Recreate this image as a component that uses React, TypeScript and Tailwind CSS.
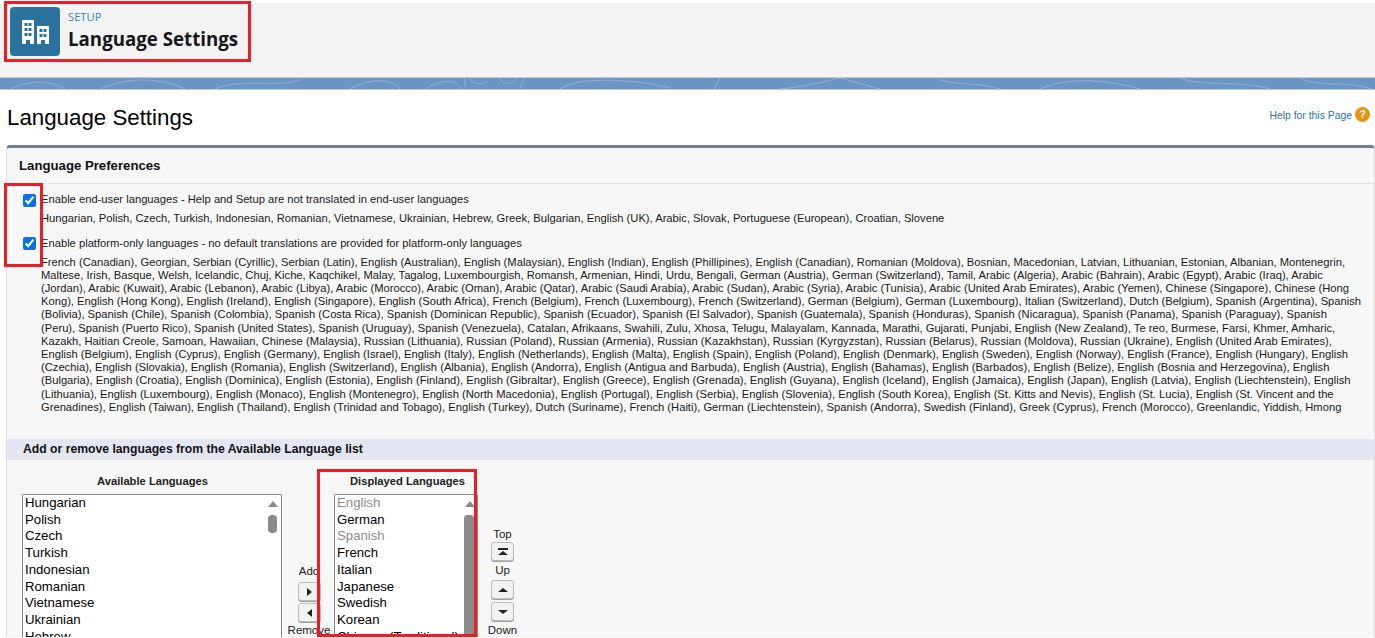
import React from "react";

const platformLines = [
  "French (Canadian), Georgian, Serbian (Cyrillic), Serbian (Latin), English (Australian), English (Malaysian), English (Indian), English (Phillipines), English (Canadian), Romanian (Moldova), Bosnian, Macedonian, Latvian, Lithuanian, Estonian, Albanian, Montenegrin,",
  "Maltese, Irish, Basque, Welsh, Icelandic, Chuj, Kiche, Kaqchikel, Malay, Tagalog, Luxembourgish, Romansh, Armenian, Hindi, Urdu, Bengali, German (Austria), German (Switzerland), Tamil, Arabic (Algeria), Arabic (Bahrain), Arabic (Egypt), Arabic (Iraq), Arabic",
  "(Jordan), Arabic (Kuwait), Arabic (Lebanon), Arabic (Libya), Arabic (Morocco), Arabic (Oman), Arabic (Qatar), Arabic (Saudi Arabia), Arabic (Sudan), Arabic (Syria), Arabic (Tunisia), Arabic (United Arab Emirates), Arabic (Yemen), Chinese (Singapore), Chinese (Hong",
  "Kong), English (Hong Kong), English (Ireland), English (Singapore), English (South Africa), French (Belgium), French (Luxembourg), French (Switzerland), German (Belgium), German (Luxembourg), Italian (Switzerland), Dutch (Belgium), Spanish (Argentina), Spanish",
  "(Bolivia), Spanish (Chile), Spanish (Colombia), Spanish (Costa Rica), Spanish (Dominican Republic), Spanish (Ecuador), Spanish (El Salvador), Spanish (Guatemala), Spanish (Honduras), Spanish (Nicaragua), Spanish (Panama), Spanish (Paraguay), Spanish",
  "(Peru), Spanish (Puerto Rico), Spanish (United States), Spanish (Uruguay), Spanish (Venezuela), Catalan, Afrikaans, Swahili, Zulu, Xhosa, Telugu, Malayalam, Kannada, Marathi, Gujarati, Punjabi, English (New Zealand), Te reo, Burmese, Farsi, Khmer, Amharic,",
  "Kazakh, Haitian Creole, Samoan, Hawaiian, Chinese (Malaysia), Russian (Lithuania), Russian (Poland), Russian (Armenia), Russian (Kazakhstan), Russian (Kyrgyzstan), Russian (Belarus), Russian (Moldova), Russian (Ukraine), English (United Arab Emirates),",
  "English (Belgium), English (Cyprus), English (Germany), English (Israel), English (Italy), English (Netherlands), English (Malta), English (Spain), English (Poland), English (Denmark), English (Sweden), English (Norway), English (France), English (Hungary), English",
  "(Czechia), English (Slovakia), English (Romania), English (Switzerland), English (Albania), English (Andorra), English (Antigua and Barbuda), English (Austria), English (Bahamas), English (Barbados), English (Belize), English (Bosnia and Herzegovina), English",
  "(Bulgaria), English (Croatia), English (Dominica), English (Estonia), English (Finland), English (Gibraltar), English (Greece), English (Grenada), English (Guyana), English (Iceland), English (Jamaica), English (Japan), English (Latvia), English (Liechtenstein), English",
  "(Lithuania), English (Luxembourg), English (Monaco), English (Montenegro), English (North Macedonia), English (Portugal), English (Serbia), English (Slovenia), English (South Korea), English (St. Kitts and Nevis), English (St. Lucia), English (St. Vincent and the",
  "Grenadines), English (Taiwan), English (Thailand), English (Trinidad and Tobago), English (Turkey), Dutch (Suriname), French (Haiti), German (Liechtenstein), Spanish (Andorra), Swedish (Finland), Greek (Cyprus), French (Morocco), Greenlandic, Yiddish, Hmong",
];

const available = ["Hungarian", "Polish", "Czech", "Turkish", "Indonesian", "Romanian", "Vietnamese", "Ukrainian", "Hebrew"];
const displayed: [string, boolean][] = [
  ["English", true], ["German", false], ["Spanish", true], ["French", false], ["Italian", false],
  ["Japanese", false], ["Swedish", false], ["Korean", false], ["Chinese (Traditional)", false],
];

function ListBox({ items, thumb, arrow, w }: { items: [string, boolean][]; thumb: string; arrow: string; w: string }) {
  return (
    <div className={`relative h-[160px] overflow-hidden rounded-t-[2px] border border-b-0 border-[#8a8a8a] bg-white pl-[2px] text-[13.2px] leading-[16.7px] text-black ${w}`}>
      {items.map(([t, dim]) => (
        <div key={t} className={dim ? "text-[#8c8c8c]" : ""}>{t}</div>
      ))}
      <div className={`absolute top-[6px] h-0 w-0 border-x-[5px] border-b-[6px] border-x-transparent border-b-[#8a8a8a] ${arrow}`} />
      <div className={`absolute top-[20px] rounded-[4px] bg-[#8a8a8a] ${thumb}`} />
    </div>
  );
}

function SmallButton({ children }: { children: React.ReactNode }) {
  return (
    <div className="flex h-[19px] w-[23px] items-center justify-center rounded-[3px] border border-[#bcbcbc] bg-[#f2f2f2] shadow-[0_1px_0_#a0a0a0]">
      {children}
    </div>
  );
}

const L = "border-y-[4px] border-r-[5px] border-y-transparent border-r-[#222]";
const R = "border-y-[4px] border-l-[5px] border-y-transparent border-l-[#222]";
const U = "border-x-[5px] border-b-[4px] border-x-transparent border-b-[#222]";
const D = "border-x-[5px] border-t-[4px] border-x-transparent border-t-[#222]";

export default function App() {
  return (
    <div className="h-[638px] w-[1375px] overflow-hidden bg-white font-['Liberation_Sans',Arial,sans-serif] text-black">
      <div className="relative h-[637px] overflow-hidden">
        <header className="h-[77px] border-t-[3px] border-white bg-[#f3f3f3] pt-[4px]">
          <div className="flex pl-[10px]">
            <div className="flex h-[49px] w-[50px] items-center justify-center rounded-[4px] bg-[#2a739e]">
              <svg viewBox="0 0 27 24" className="h-[24px] w-[27px]" fill="#fff">
                <path d="M0 0h12v24H8v-4H4v4H0z" />
                <path d="M15 6h12v18h-4v-4h-4v4h-4z" />
                <g fill="#2a739e">
                  <rect x="2.5" y="3" width="3" height="3" /><rect x="6.5" y="3" width="3" height="3" />
                  <rect x="2.5" y="8" width="3" height="3" /><rect x="6.5" y="8" width="3" height="3" />
                  <rect x="2.5" y="13" width="3" height="3" /><rect x="6.5" y="13" width="3" height="3" />
                  <rect x="17.5" y="9" width="3" height="3" /><rect x="21.5" y="9" width="3" height="3" />
                  <rect x="17.5" y="14" width="3" height="3" /><rect x="21.5" y="14" width="3" height="3" />
                </g>
              </svg>
            </div>
            <div className="ml-[8px] flex flex-col font-['Open_Sans',sans-serif]">
              <div className="mt-[3px] text-[11.2px] leading-[14px] text-[#3a85bd]">SETUP</div>
              <div className="mt-[3px] text-[18.7px] font-bold leading-[24px] text-[#16181a]">Language Settings</div>
            </div>
          </div>
        </header>

        <div className="h-[13px] overflow-hidden border-y border-t-[#c9c9c9] border-b-[#b4cbe6] bg-[#6a95c3]">
          <svg className="block h-full w-full" viewBox="0 0 1375 11" fill="none" stroke="#8fb0d3" strokeWidth="1">
            <path d="M10 11C30 2 50 2 65 11M100 11C130 -2 160 0 185 11M215 11C240 0 280 10 300 2M350 11C370 0 390 0 400 11M425 11C440 2 455 0 462 11M465 0V9M470 1C474 6 484 8 486 3M498 0C505 6 512 8 516 0M525 0L520 10M560 11C580 -3 640 2 670 10M720 0L714 11M780 11C810 8 830 2 840 0L880 11M940 2C960 8 980 4 1000 11M1040 11C1070 -2 1110 2 1140 11M1180 0C1200 9 1240 2 1270 11M1300 0C1320 10 1345 2 1372 11" />
          </svg>
        </div>

        <main className="px-[6px]">
          <div className="flex items-start justify-between pt-[14px]">
            <h1 className="ml-px text-[22.3px] leading-[28px]">Language Settings</h1>
            <div className="mr-[-1px] mt-[-1px] flex items-center gap-[3px]">
              <span className="text-[10.4px] leading-[26px] text-[#2a6fb0]">Help for this Page</span>
              <span className="mt-[-3px] flex h-[15px] w-[15px] items-center justify-center rounded-full bg-[#e8920f] text-[11px] font-bold leading-none text-white">?</span>
            </div>
          </div>

          <section className="mr-[-6px] mt-[13px] h-[600px] rounded-t-[4px] border-x border-t-[3px] border-[#e0e0e0] border-t-[#737f9a] bg-[#f7f7f7]">
            <h2 className="pl-[12px] pt-[10px] text-[13.2px] font-bold leading-[16px] text-[#111]">Language Preferences</h2>

            <div className="mt-[9px] border-t border-[#e4e4e4] pl-[34px] pr-[10px] pt-[9px] text-[11.2px] leading-[13.2px] text-[#1a1a1a]">
              <div className="relative">
                <input type="checkbox" defaultChecked className="absolute left-[-18px] top-[1px] m-0 h-[13px] w-[13px] accent-[#0b6fe6]" />
                Enable end-user languages - Help and Setup are not translated in end-user languages
              </div>
              <p className="mt-[6px]">Hungarian, Polish, Czech, Turkish, Indonesian, Romanian, Vietnamese, Ukrainian, Hebrew, Greek, Bulgarian, English (UK), Arabic, Slovak, Portuguese (European), Croatian, Slovene</p>
              <div className="relative mt-[12px]">
                <input type="checkbox" defaultChecked className="absolute left-[-18px] top-0 m-0 h-[13px] w-[13px] accent-[#0b6fe6]" />
                Enable platform-only languages - no default translations are provided for platform-only languages
              </div>
              <div className="mt-[5px]">
                {platformLines.map((l) => (
                  <div key={l} className="whitespace-nowrap">{l}</div>
                ))}
              </div>
            </div>

            <div className="mt-[25px] flex h-[21px] items-center bg-[#e4e7f1] pl-[16px] text-[12.2px] font-bold text-[#111]">
              Add or remove languages from the Available Language list
            </div>

            <div className="flex pl-[15px] pt-[13px]">
              <div className="w-[260px]">
                <div className="mb-[4px] pl-px text-center text-[11.2px] font-bold leading-[17px] text-[#222]">Available Languages</div>
                <ListBox items={available.map((t) => [t, false] as [string, boolean])} thumb="right-[4px] h-[18px] w-[9px]" arrow="right-[3px]" w="w-[260px]" />
              </div>
              <div className="flex w-[52px] flex-col items-center pl-[2px] pt-[91px] text-[11.5px] leading-[14px] text-[#222]">
                <span>Add</span>
                <div className="mt-[4px]"><SmallButton><div className={R} /></SmallButton></div>
                <div className="mt-[2px]"><SmallButton><div className={L} /></SmallButton></div>
                <span className="mt-px">Remove</span>
              </div>
              <div className="w-[144px] shrink-0">
                <div className="mb-[4px] pl-[16px] text-[11.2px] font-bold leading-[17px] text-[#222]">Displayed Languages</div>
                <ListBox items={displayed} thumb="right-[3px] h-[140px] w-[10px]" arrow="right-[2px]" w="w-[144px]" />
              </div>
              <div className="ml-[10px] flex w-[29px] flex-col items-center pt-[54px] text-[11.5px] leading-[14px] text-[#222]">
                <span>Top</span>
                <div className="mt-px">
                  <SmallButton>
                    <div className="flex flex-col items-center gap-px"><div className="h-[2px] w-[10px] bg-[#222]" /><div className={U} /></div>
                  </SmallButton>
                </div>
                <span className="mt-[2px]">Up</span>
                <div className="mt-[3px]"><SmallButton><div className={U} /></SmallButton></div>
                <div className="mt-[3px]"><SmallButton><div className={D} /></SmallButton></div>
                <span className="mt-[2px]">Down</span>
              </div>
            </div>
          </section>
        </main>

        {/* Red annotation boxes drawn over the screenshot */}
        <div className="absolute left-[4px] top-[1px] h-[61px] w-[247px] border-[3px] border-[#ee1c25]" />
        <div className="absolute left-[4px] top-[183px] h-[84px] w-[39px] border-[3px] border-[#ee1c25]" />
        <div className="absolute left-[317px] top-[469px] h-[168px] w-[160px] border-[3px] border-[#ee1c25]" />
      </div>
    </div>
  );
}
